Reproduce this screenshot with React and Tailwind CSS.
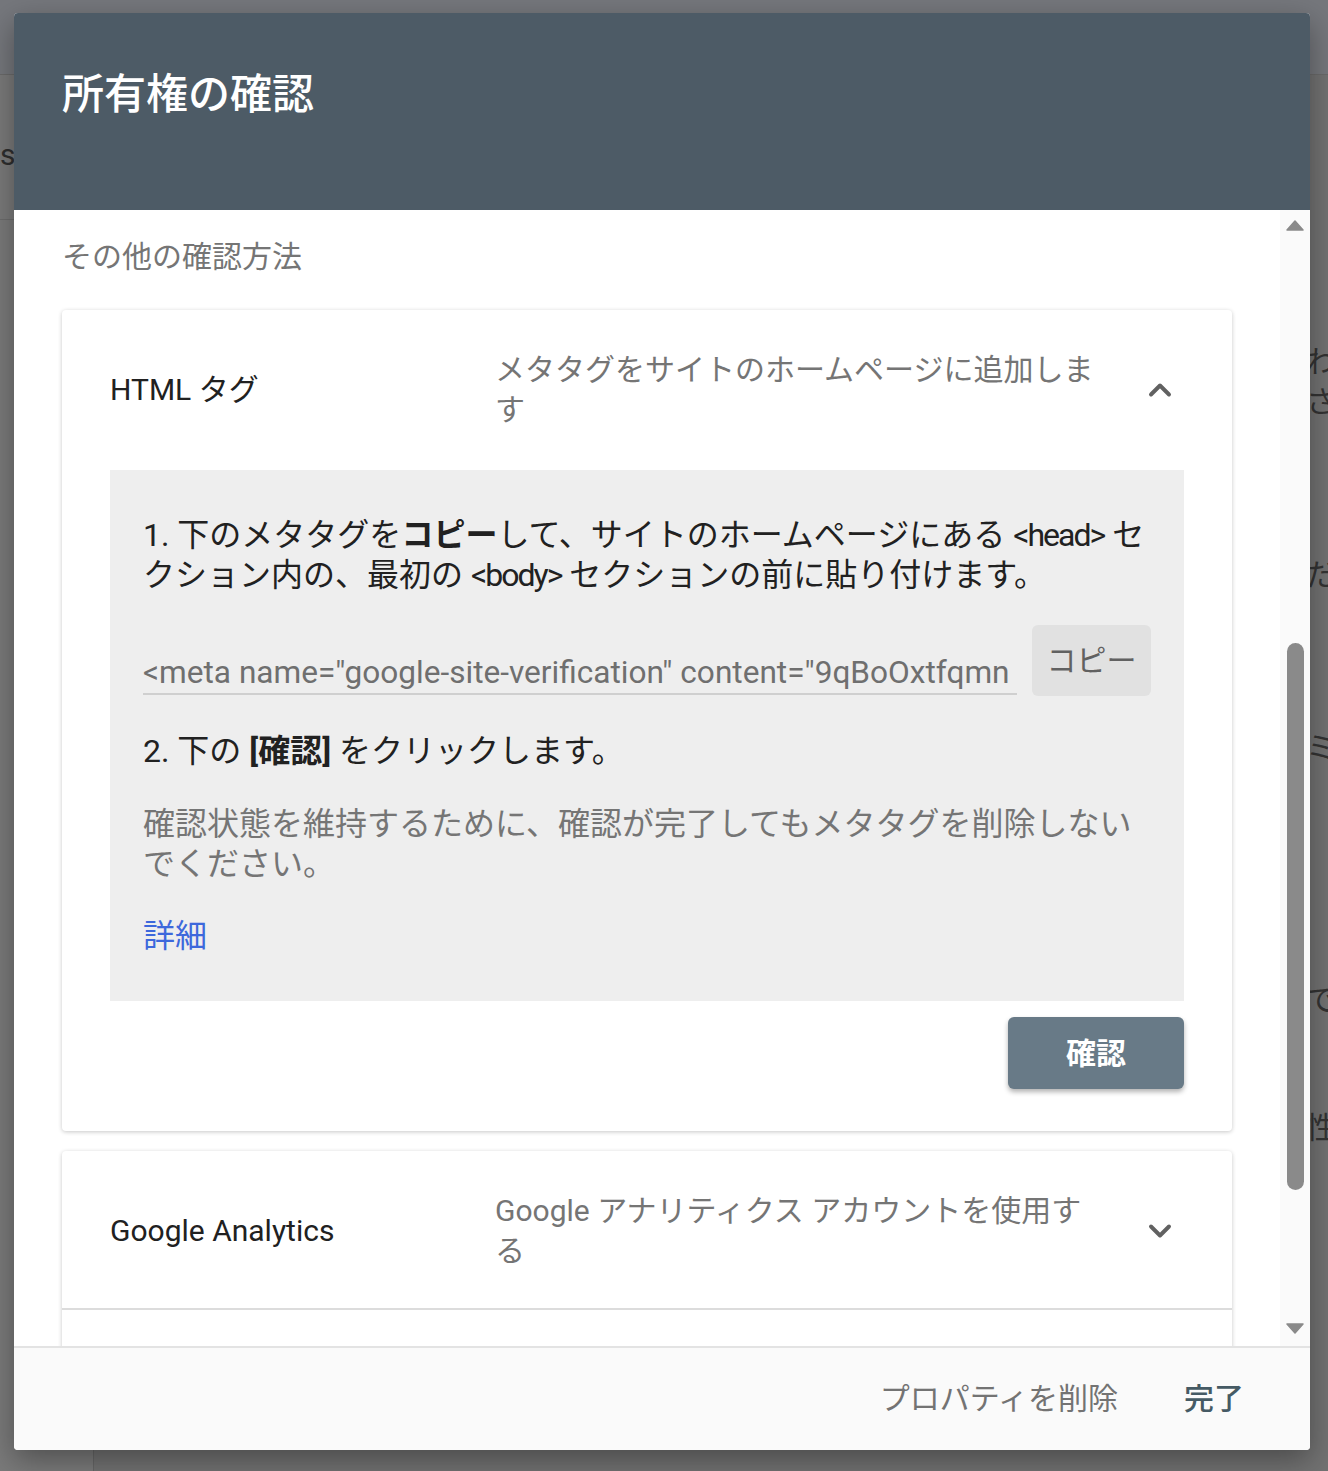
import { ChevronUp, ChevronDown } from 'lucide-react';

const font = { fontFamily: "Roboto, 'Noto Sans CJK JP', sans-serif" };

function Triangle({ up }) {
  return (
    <svg width="18" height="11" viewBox="0 0 18 11">
      <path d={up ? 'M9 1 L17 10 L1 10 Z' : 'M1 1 L17 1 L9 10 Z'} fill="#8a8a8a" strokeLinejoin="round" stroke="#8a8a8a" strokeWidth="1.5" />
    </svg>
  );
}

function PanelHeader({ title, desc, open }) {
  return (
    <div className={`flex items-center pl-[48px] pr-[48px] pt-[40px] ${open ? 'pb-[40px]' : 'pb-[37px]'}`}>
      <div className="w-[385px] shrink-0 text-[30px] leading-[40px] text-[#212121]">{title}</div>
      <div className="w-[612px] text-[30px] leading-[40px] text-[#757575]">{desc}</div>
      <div className="flex-1" />
      <div className="w-[48px] h-[48px] flex items-center justify-center text-[#616161]">
        {open ? <ChevronUp size={36} strokeWidth={2.6} /> : <ChevronDown size={36} strokeWidth={2.6} />}
      </div>
    </div>
  );
}

export default function App() {
  return (
    <div className="relative w-[1328px] h-[1471px] overflow-hidden bg-[#727272]" style={font}>
      {/* dimmed page behind the dialog */}
      <div className="flex flex-col h-full">
        <div className="h-[75px] bg-[#75777c] border-b border-[#6a6a6a]" />
        <div className="flex flex-1">
          <div className="w-[94px] bg-[#7a7a7a] border-r border-[#666]">
            <div className="h-[145px] border-b border-[#6c6c6c] pt-[60px] text-[30px] leading-[40px] text-[#2e2e2e]">s</div>
          </div>
          <div className="flex-1" />
          <div className="w-[22px] overflow-hidden text-[30px] leading-[40px] text-[#333] pt-[267px] whitespace-nowrap">
            <div>わ</div>
            <div>さ</div>
            <div className="mt-[133px]">だ</div>
            <div className="mt-[133px]">ミ</div>
            <div className="mt-[212px]">で</div>
            <div className="mt-[88px]">性</div>
          </div>
        </div>
      </div>

      {/* dialog */}
      <div className="absolute left-[14px] top-[13px] w-[1296px] h-[1437px] rounded-[4px] overflow-hidden flex flex-col bg-white shadow-[0_10px_30px_rgba(0,0,0,0.35)]">
        <div className="h-[197px] shrink-0 bg-[#4d5b66] pl-[48px] pt-[57px]">
          <h1 className="text-[42px] leading-[50px] font-medium text-white">所有権の確認</h1>
        </div>

        <div className="flex flex-1 min-h-0">
          <div className="flex-1 overflow-hidden bg-white pl-[48px] pr-[48px] pt-[27px]">
            <div className="text-[30px] leading-[40px] text-[#757575] mb-[33px]">その他の確認方法</div>

            {/* expanded panel */}
            <div className="bg-white rounded-[4px] shadow-[0_1px_4px_rgba(0,0,0,0.22)] pb-[42px]">
              <PanelHeader title="HTML タグ" desc="メタタグをサイトのホームページに追加します" open />
              <div className="mx-[48px] bg-[#eeeeee] pl-[33px] pr-[33px] pt-[45px] pb-[45px] text-[32px] leading-[40px] text-[#212121]">
                <p>
                  1. 下のメタタグを<b className="font-bold">コピー</b>して、サイトのホームページにある <span className="tracking-[-2px]">&lt;head&gt;</span> セクション内の、最初の <span className="tracking-[-2px]">&lt;body&gt;</span> セクションの前に貼り付けます。
                </p>
                <div className="flex items-start gap-[15px] mt-[30px]">
                  <div className="flex-1 min-w-0 mt-[28px] h-[42px] border-b-2 border-[#cfcfcf] overflow-hidden whitespace-nowrap text-[31.6px] leading-[40px] text-[#6f6f6f]">
                    &lt;meta name="google-site-verification" content="9qBoOxtfqmn
                  </div>
                  <button className="w-[119px] h-[71px] shrink-0 rounded-[6px] bg-[#e1e1e1] text-[30px] text-[#616161]">コピー</button>
                </div>
                <p className="mt-[35px]">
                  2. 下の <b className="font-bold">[確認]</b> をクリックします。
                </p>
                <p className="mt-[33px] text-[#757575]">確認状態を維持するために、確認が完了してもメタタグを削除しないでください。</p>
                <a className="block mt-[32px] text-[#3d68dc]">詳細</a>
              </div>
              <div className="flex justify-end pr-[48px] mt-[16px]">
                <button className="w-[176px] h-[72px] rounded-[6px] bg-[#687a87] text-white text-[30px] font-bold shadow-[0_3px_5px_rgba(0,0,0,0.3)]">確認</button>
              </div>
            </div>

            {/* collapsed panels */}
            <div className="mt-[20px] bg-white rounded-t-[4px] shadow-[0_1px_4px_rgba(0,0,0,0.22)]">
              <PanelHeader title="Google Analytics" desc="Google アナリティクス アカウントを使用する" />
              <div className="border-t-2 border-[#dcdcdc] h-[160px]" />
            </div>
          </div>

          {/* scrollbar */}
          <div className="w-[30px] shrink-0 bg-[#fafafa] flex flex-col items-center pt-[10px] pb-[12px]">
            <Triangle up />
            <div className="mt-[412px] w-[17px] h-[547px] rounded-full bg-[#8a8a8a]" />
            <div className="flex-1" />
            <Triangle />
          </div>
        </div>

        <div className="h-[104px] shrink-0 bg-[#fafafa] border-t-2 border-[#e3e3e3] flex items-center justify-end pr-[66px] gap-[66px]">
          <button className="text-[30px] leading-[40px] text-[#737373]">プロパティを削除</button>
          <button className="text-[30px] leading-[40px] font-medium text-[#455a64]">完了</button>
        </div>
      </div>
    </div>
  );
}
